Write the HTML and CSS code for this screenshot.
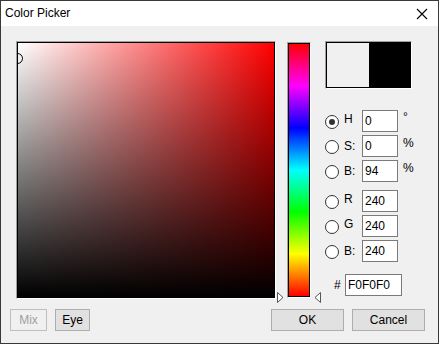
FILE: index.html
```html
<!DOCTYPE html>
<html lang="en-US">
  <head>
    <meta charset="UTF-8" />
    <title>Color Picker</title>
    <link rel="stylesheet" href="styles.css">
  </head>
  <body>
    <div class="window">
      <div class="titlebar">
        <span class="title">Color Picker</span>
        <svg class="close" width="12" height="12" viewBox="0 0 12 12">
          <path d="M1 1 L11 11 M11 1 L1 11" stroke="#000" stroke-width="1.1" fill="none"/>
        </svg>
      </div>

      <div class="content">
        <div class="main">
          <div class="sunken field">
            <div class="field-inner">
              <span class="marker"></span>
            </div>
          </div>

          <div class="hue-col">
            <div class="sunken hue">
              <div class="hue-inner"></div>
            </div>
            <svg class="arrow arrow-left" width="7" height="11" viewBox="0 0 7 11">
              <path d="M0.5 0.5 L6 5.5 L0.5 10.5 Z" fill="#fff" stroke="#555"/>
            </svg>
            <svg class="arrow arrow-right" width="7" height="11" viewBox="0 0 7 11">
              <path d="M6.5 0.5 L1 5.5 L6.5 10.5 Z" fill="#fff" stroke="#555"/>
            </svg>
          </div>

          <div class="side">
            <div class="sunken preview">
              <div class="preview-inner">
                <span class="swatch old"></span>
                <span class="swatch new"></span>
              </div>
            </div>

            <div class="group hsb">
              <div class="row">
                <span class="radio checked"></span>
                <span class="label up">H</span>
                <span class="field-box">0</span>
                <span class="unit deg">°</span>
              </div>
              <div class="row">
                <span class="radio"></span>
                <span class="label">S:</span>
                <span class="field-box">0</span>
                <span class="unit">%</span>
              </div>
              <div class="row">
                <span class="radio"></span>
                <span class="label">B:</span>
                <span class="field-box">94</span>
                <span class="unit">%</span>
              </div>
            </div>

            <div class="group">
              <div class="row">
                <span class="radio"></span>
                <span class="label up">R</span>
                <span class="field-box">240</span>
              </div>
              <div class="row">
                <span class="radio"></span>
                <span class="label up">G</span>
                <span class="field-box">240</span>
              </div>
              <div class="row">
                <span class="radio"></span>
                <span class="label">B:</span>
                <span class="field-box">240</span>
              </div>
            </div>

            <div class="hex-row">
              <span class="hash">#</span>
              <span class="field-box hex">F0F0F0</span>
            </div>
          </div>
        </div>

        <div class="buttons">
          <button class="btn disabled" style="width: 37px">Mix</button>
          <button class="btn" style="width: 35px">Eye</button>
          <span class="spacer"></span>
          <button class="btn wide">OK</button>
          <button class="btn wide">Cancel</button>
        </div>
      </div>
    </div>
  </body>
</html>
```

FILE: styles.css
```css
body {
  margin: 0;
  font-family: "Liberation Sans", Arial, sans-serif;
  font-size: 12px;
  color: #000;
}

.window {
  width: 439px;
  height: 344px;
  box-sizing: border-box;
  border: 1px solid #3a3a3a;
  background-color: #f0f0f0;
  display: flex;
  flex-direction: column;
}

.titlebar {
  height: 25px;
  background-color: #fff;
  display: flex;
  align-items: center;
  padding-left: 4px;
  padding-right: 10px;
  flex-shrink: 0;
}
.title {
  flex: 1;
  font-size: 12px;
  margin-top: -1px;
}
.close {
  display: block;
}

.content {
  padding: 15px 0 0 15px;
}
.main {
  display: flex;
  align-items: flex-start;
}

/* sunken frame: grey top/left, white bottom/right, black inner line */
.sunken {
  border: 1px solid;
  border-color: #a0a0a0 #fff #fff #a0a0a0;
}

.field {
  width: 258px;
  height: 256px;
}
.field-inner {
  position: relative;
  box-sizing: border-box;
  width: 100%;
  height: 100%;
  border: 1px solid #000;
  overflow: hidden;
  background: linear-gradient(to top, #000, rgba(0,0,0,0)),
    linear-gradient(to right, #fff, #f00);
}
.marker {
  position: absolute;
  left: -6px;
  top: 10px;
  width: 9px;
  height: 9px;
  border: 1px solid #000;
  border-radius: 50%;
}

.hue-col {
  position: relative;
  margin-left: 11px;
  padding-top: 1px;
}
.hue {
  width: 22px;
  height: 254px;
}
.hue-inner {
  box-sizing: border-box;
  width: 100%;
  height: 100%;
  border: 1px solid #000;
  background: linear-gradient(to bottom, #f00, #f0f, #00f, #0ff, #0f0, #ff0, #f00);
}
.arrow {
  position: absolute;
  bottom: -5px;
  display: block;
}
.arrow-left {
  left: -10px;
}
.arrow-right {
  right: -10px;
}

.side {
  margin-left: 14px;
}
.preview {
  width: 85px;
  height: 46px;
}
.preview-inner {
  box-sizing: border-box;
  height: 100%;
  border: 1px solid #000;
  display: flex;
}
.swatch {
  flex: 1;
}
.swatch.old {
  background-color: #f0f0f0;
}
.swatch.new {
  background-color: #000;
}

.group {
  display: flex;
  flex-direction: column;
  gap: 3px;
  margin-top: 8px;
}
.group.hsb {
  margin-top: 21px;
}
.row {
  display: flex;
  align-items: center;
  height: 22px;
}
.radio {
  position: relative;
  width: 12px;
  height: 12px;
  border: 1px solid #333;
  border-radius: 50%;
  background-color: #fff;
  margin-top: 1px;
}
.radio.checked::after {
  content: "";
  position: absolute;
  left: 3px;
  top: 3px;
  width: 6px;
  height: 6px;
  border-radius: 50%;
  background-color: #333;
}
.label {
  width: 18px;
  margin-left: 5px;
}
.label.up {
  margin-top: -5px;
}
.field-box {
  box-sizing: border-box;
  width: 36px;
  height: 22px;
  border: 1px solid #7a7a7a;
  background-color: #fff;
  padding: 3px 0 0 2px;
  line-height: 14px;
}
.unit {
  margin-left: 5px;
  margin-top: -7px;
}
.unit.deg {
  margin-top: -9px;
}

.hex-row {
  display: flex;
  align-items: center;
  margin-top: 12px;
  height: 22px;
}
.hash {
  margin-left: 9px;
  width: 11px;
}
.field-box.hex {
  width: 57px;
}

.buttons {
  display: flex;
  gap: 8px;
  margin-top: 10px;
  margin-left: -6px;
  padding-right: 13px;
}
.spacer {
  flex: 1;
}
.btn {
  height: 22px;
  box-sizing: border-box;
  border: 1px solid #adadad;
  background-color: #e1e1e1;
  font-family: "Liberation Sans", Arial, sans-serif;
  font-size: 12px;
  color: #000;
  padding: 0;
}
.btn.disabled {
  background-color: #f0f0f0;
  border-color: #bfbfbf;
  color: #a0a0a0;
}
.btn.wide {
  width: 73px;
}
```
